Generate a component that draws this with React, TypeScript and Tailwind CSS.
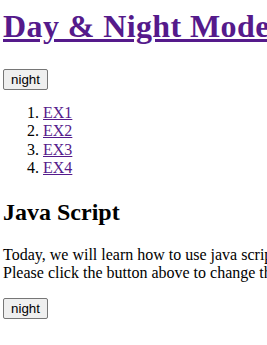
export default function App() {
  const btn =
    'block h-[21px] rounded-[2px] border border-[#767676] bg-[#efefef] px-[6px] text-[13.33px] leading-[15px] text-black';

  return (
    <div className="min-h-screen w-full overflow-hidden bg-white pt-[8px] pl-[3px] text-[16px] text-black [font-family:'Liberation_Serif',serif]">
      {/* Title */}
      <h1 className="whitespace-nowrap text-[32px] font-bold leading-[37px] tracking-[0.4px]">
        <a href="#" className="text-[#551A8B] underline">
          Day &amp; Night Mode
        </a>
      </h1>

      <button className={`${btn} mt-[24px] w-[45px] [font-family:'Liberation_Sans',sans-serif]`}>night</button>

      {/* Exercises */}
      <ol className="mt-[14px] list-decimal pl-[40px] leading-[18.4px]">
        <li><a href="#" className="text-[#551A8B] underline">EX1</a></li>
        <li><a href="#" className="text-[#551A8B] underline">EX2</a></li>
        <li><a href="#" className="text-[#551A8B] underline">EX3</a></li>
        <li><a href="#" className="text-[#551A8B] underline">EX4</a></li>
      </ol>

      <h2 className="mt-[20px] whitespace-nowrap text-[24px] font-bold leading-[28px]">Java Script</h2>

      <p className="mt-[20px] whitespace-nowrap leading-[18.4px]">
        Today, we will learn how to use java script.
        <br />
        Please click the button above to change the mode.
      </p>

      <button className={`${btn} mt-[16px] w-[45px] [font-family:'Liberation_Sans',sans-serif]`}>night</button>
    </div>
  );
}
